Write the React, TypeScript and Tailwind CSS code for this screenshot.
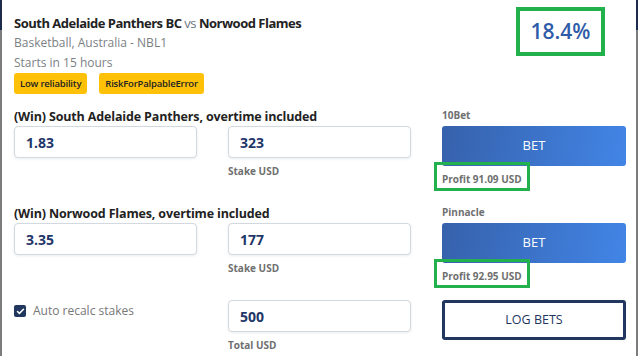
import { Check } from "lucide-react";

const inputCls =
  "h-[32px] w-full rounded-[4px] border border-[#d3d9e0] bg-white px-[11px] flex items-center text-[14px] font-bold text-[#1f3768] shadow-[0_1px_3px_rgba(0,0,0,0.08)]";

const smallLabel = "text-[10px] font-bold leading-[14px] text-[#6f6f6f]";

type RowProps = {
  label: string;
  odds: string;
  stake: string;
  bookie: string;
  profit: string;
};

const BetRow = ({ label, odds, stake, bookie, profit }: RowProps) => {
  return (
    <div className="grid grid-cols-[183px_183px_184px] gap-x-[31px]">
      <div className="col-span-2 flex flex-col">
        <div className="h-[18px] text-[12.5px] font-bold leading-[18px] text-[#222] tracking-[-0.15px]">
          {label}
        </div>
        <div className="grid grid-cols-[183px_183px] gap-x-[31px]">
          <div className={inputCls}>{odds}</div>
          <div className="flex flex-col">
            <div className={inputCls}>{stake}</div>
            <div className={smallLabel + " mt-[6px]"}>Stake USD</div>
          </div>
        </div>
      </div>
      <div className="flex flex-col">
        <div className={smallLabel + " h-[18px]"}>{bookie}</div>
        <button className="h-[40px] w-full rounded-[3px] bg-[linear-gradient(100deg,#3661ab,#4285e6)] text-[13px] text-white">
          BET
        </button>
        <div className="relative mt-[6px]">
          <div className={smallLabel + " text-[10.5px]"}>{profit}</div>
          <div className="absolute -left-[8px] -top-[10px] h-[29px] w-[96px] border-[3px] border-[#22b14c]" />
        </div>
      </div>
    </div>
  );
};

const badgeCls =
  "h-[21px] rounded-[3px] bg-[#ffc107] px-[6px] text-[9.5px] font-semibold leading-[21px] text-[#222] tracking-[-0.2px]";

const App = () => {
  return (
    <div
      className="w-[640px] h-[356px] bg-white overflow-hidden"
      style={{ fontFamily: '"Open Sans", "Noto Sans", sans-serif' }}
    >
      <div className="w-[638px] h-[356px] px-[2px] bg-[linear-gradient(to_bottom,#1d2b4d_0,#1d2b4d_30px,#7c7c7c_30px)]">
        <div className="h-full bg-white pl-[12px]">
          <div className="flex justify-between">
            <div className="pt-[13px]">
              <div className="text-[13px] leading-[20px] font-bold text-[#222] tracking-[-0.5px]">
                South Adelaide Panthers BC{" "}
                <span className="font-normal text-[#6c757d]">vs</span>{" "}
                Norwood Flames
              </div>
              <div className="text-[12px] leading-[19.5px] text-[#7b7f84]">
                Basketball, Australia - NBL1
              </div>
              <div className="text-[12px] leading-[19.5px] text-[#7b7f84]">
                Starts in 15 hours
              </div>
              <div className="mt-px flex gap-[12px]">
                <span className={badgeCls}>Low reliability</span>
                <span className={badgeCls}>RiskForPalpableError</span>
              </div>
            </div>
            <div className="mr-[31px] mt-[7px] flex h-[49px] w-[89px] items-center justify-center border-[4px] border-[#22b14c]">
              <span className="text-[21px] font-semibold text-[#2f5ca8]">
                18.4%
              </span>
            </div>
          </div>

          <div className="mt-[14px] flex flex-col gap-[19px]">
            <BetRow
              label="(Win) South Adelaide Panthers, overtime included"
              odds="1.83"
              stake="323"
              bookie="10Bet"
              profit="Profit 91.09 USD"
            />
            <BetRow
              label="(Win) Norwood Flames, overtime included"
              odds="3.35"
              stake="177"
              bookie="Pinnacle"
              profit="Profit 92.95 USD"
            />
          </div>

          <div className="mt-[17px] grid grid-cols-[183px_183px_184px] gap-x-[31px]">
            <div className="flex items-start gap-[7px] pt-[4px]">
              <span className="mt-[1px] flex h-[12px] w-[12px] items-center justify-center rounded-[2px] bg-[#22375f]">
                <Check size={9} strokeWidth={4} color="white" />
              </span>
              <span className="text-[12px] leading-[14px] text-[#777]">
                Auto recalc stakes
              </span>
            </div>
            <div className="flex flex-col">
              <div className={inputCls}>500</div>
              <div className={smallLabel + " mt-[6px]"}>Total USD</div>
            </div>
            <button className="h-[40px] w-full rounded-[3px] border-[3px] border-[#22375f] bg-white text-[12.5px] text-[#22375f]">
              LOG BETS
            </button>
          </div>
        </div>
      </div>
    </div>
  );
};

export default App;
